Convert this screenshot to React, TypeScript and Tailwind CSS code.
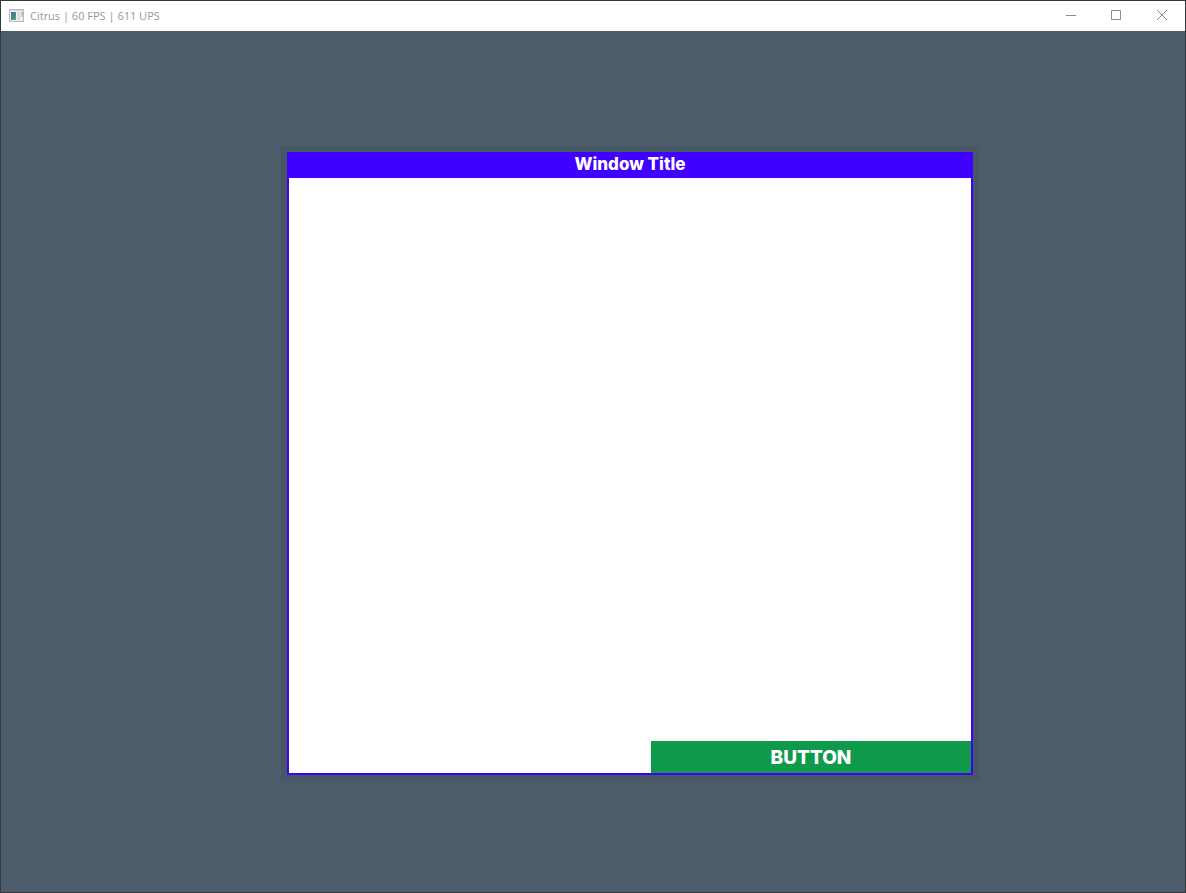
import React from "react";

function AppIcon() {
  return (
    <svg width="15" height="13" viewBox="0 0 15 13" shapeRendering="crispEdges" aria-hidden="true">
      <defs>
        <linearGradient id="pane" x1="0" y1="0" x2="1" y2="1">
          <stop offset="0" stopColor="#5479a8" />
          <stop offset="0.5" stopColor="#43868c" />
          <stop offset="1" stopColor="#5cae7c" />
        </linearGradient>
      </defs>
      <rect width="15" height="13" fill="#b9bcc0" />
      <rect x="1" y="1" width="13" height="1" fill="#d5d7da" />
      <rect x="1" y="2" width="13" height="10" fill="#eeeff1" />
      <rect x="2" y="3" width="5" height="8" fill="url(#pane)" />
      <rect x="8" y="3" width="3" height="8" fill="#dcdde1" />
      <rect x="12" y="3" width="2" height="2" fill="#a9bfd6" />
      <rect x="12" y="5" width="2" height="3" fill="#b5d5bd" />
    </svg>
  );
}

function CaptionButton({ label, children }: { label: string; children: React.ReactNode }) {
  return (
    <button
      type="button"
      aria-label={label}
      className="flex h-full w-[46px] items-center justify-center hover:bg-gray-200"
    >
      <svg width="11" height="11" viewBox="0 0 11 11" fill="none" stroke="#8c8c8c" aria-hidden="true">
        {children}
      </svg>
    </button>
  );
}

export default function App() {
  return (
    <div className="flex h-screen flex-col border border-[#34383d] bg-[#4d5c6a]">
      <header className="flex h-[30px] shrink-0 items-center justify-between bg-white">
        <div className="flex h-full items-center gap-1.5 pb-px pl-2">
          <AppIcon />
          <span className="font-['Open_Sans','Noto_Sans',sans-serif] text-[11px] leading-4 text-[#999999]">
            Citrus | 60 FPS | 611 UPS
          </span>
        </div>
        <div className="flex h-full pb-px">
          <CaptionButton label="Minimize">
            <path d="M1 5.5H11" />
          </CaptionButton>
          <CaptionButton label="Maximize">
            <path d="M0.5 0.5H9.5V9.5H0.5Z" />
          </CaptionButton>
          <CaptionButton label="Close">
            <path d="M0 0L10 10M10 0L0 10" />
          </CaptionButton>
        </div>
      </header>

      <main className="flex flex-1 pt-[121px] pr-[212px] pb-[117px] pl-[286px] font-[Inter,sans-serif] font-extrabold text-white">
        <section className="flex flex-1 flex-col border-2 border-[#4000ff] bg-white shadow-[0_0_0_6px_#485764]">
          <h1 className="h-6 bg-[#4000ff] text-center text-[17px] leading-5">Window Title</h1>
          <div className="flex flex-1 items-end justify-end">
            <button type="button" className="h-8 w-80 bg-[#0f9a4b] pt-0.5 text-center text-[19px] leading-7">
              BUTTON
            </button>
          </div>
        </section>
      </main>
    </div>
  );
}
